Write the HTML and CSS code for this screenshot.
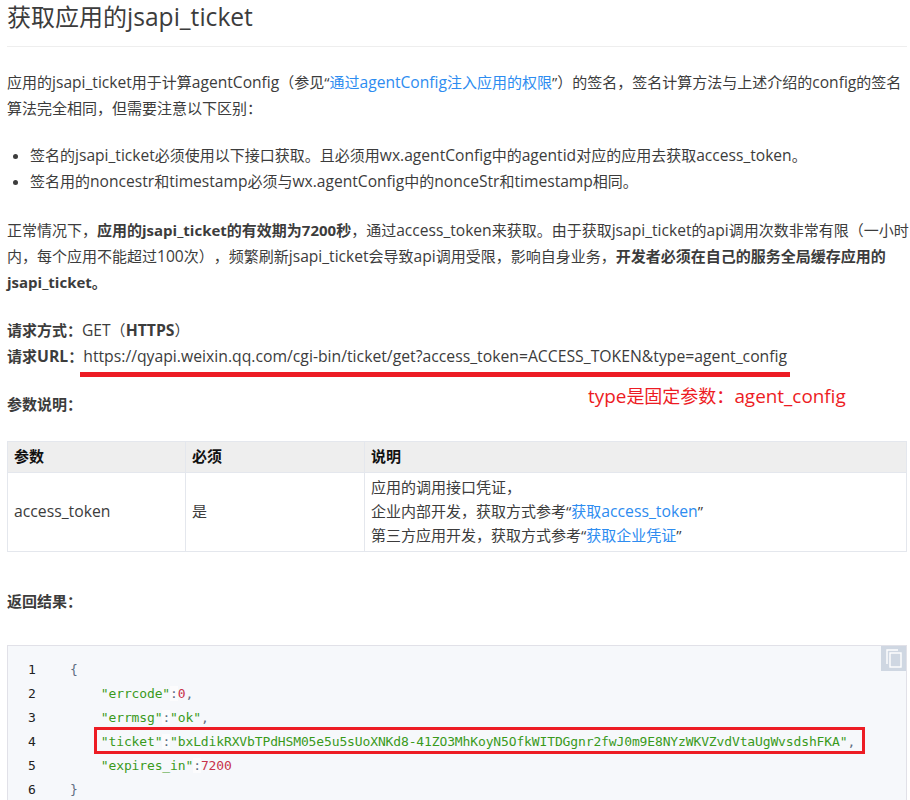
FILE: index.html
```html
<!DOCTYPE html>
<html lang="zh-CN">
<head>
<meta charset="utf-8">
<title>获取应用的jsapi_ticket</title>
<link rel="stylesheet" href="styles.css">
</head>
<body>
<main class="page">
  <h2 class="title">获取应用的<span class="l">jsapi_ticket</span></h2>
  <p class="para">应用的<span class="l">jsapi_ticket</span>用于计算<span class="l">agentConfig</span>（参见“<a href="#">通过<span class="l">agentConfig</span>注入应用的权限</a>”）的签名，签名计算方法与上述介绍的<span class="l">config</span>的签名算法完全相同，但需要注意以下区别：</p>
  <ul class="list">
    <li>签名的<span class="l">jsapi_ticket</span>必须使用以下接口获取。且必须用<span class="l">wx.agentConfig</span>中的<span class="l">agentid</span>对应的应用去获取<span class="l">access_token</span>。</li>
    <li>签名用的<span class="l">noncestr</span>和<span class="l">timestamp</span>必须与<span class="l">wx.agentConfig</span>中的<span class="l">nonceStr</span>和<span class="l">timestamp</span>相同。</li>
  </ul>
  <p class="para">正常情况下，<strong>应用的jsapi_ticket的有效期为7200秒</strong>，通过<span class="l">access_token</span>来获取。由于获取<span class="l">jsapi_ticket</span>的<span class="l">api</span>调用次数非常有限（一小时内，每个应用不能超过<span class="l">100</span>次），频繁刷新<span class="l">jsapi_ticket</span>会导致<span class="l">api</span>调用受限，影响自身业务，<strong>开发者必须在自己的服务全局缓存应用的jsapi_ticket。</strong></p>
  <p class="para"><strong>请求方式：</strong><span class="l">GET</span>（<strong class="url">HTTPS</strong>）<br><strong>请求<span class="url">URL</span>：</strong><span class="url">https://qyapi.weixin.qq.com/cgi-bin/ticket/get?access_token=ACCESS_TOKEN&amp;type=agent_config</span></p>
  <p class="para params"><strong>参数说明：</strong></p>
  <table class="table">
    <thead>
      <tr><th class="col-a">参数</th><th class="col-b">必须</th><th>说明</th></tr>
    </thead>
    <tbody>
      <tr>
        <td><span class="url">access_token</span></td>
        <td>是</td>
        <td>应用的调用接口凭证，<br>企业内部开发，获取方式参考“<a href="#">获取<span class="url">access_token</span></a>”<br>第三方应用开发，获取方式参考“<a href="#">获取企业凭证</a>”</td>
      </tr>
    </tbody>
  </table>
  <p class="para result"><strong>返回结果：</strong></p>
  <div class="code">
    <span class="copy"><svg width="16" height="19" viewBox="0 0 16 19" aria-hidden="true"><path d="M12 1H1v14" fill="none" stroke="#fff" stroke-width="1.4"/><rect x="4" y="4" width="11" height="14" fill="none" stroke="#fff" stroke-width="1.4"/></svg></span>
    <div class="row"><span class="num">1</span><code>{</code></div>
    <div class="row"><span class="num">2</span><code>    <i class="str">"errcode"</i><i class="colon">:</i><i class="val">0</i>,</code></div>
    <div class="row"><span class="num">3</span><code>    <i class="str">"errmsg"</i><i class="colon">:</i><i class="str">"ok"</i>,</code></div>
    <div class="row"><span class="num">4</span><code>    <i class="str">"ticket"</i><i class="colon">:</i><i class="str">"bxLdikRXVbTPdHSM05e5u5sUoXNKd8-41ZO3MhKoyN5OfkWITDGgnr2fwJ0m9E8NYzWKVZvdVtaUgWvsdshFKA"</i>,</code></div>
    <div class="row"><span class="num">5</span><code>    <i class="str">"expires_in"</i><i class="colon">:</i><i class="val">7200</i></code></div>
    <div class="row"><span class="num">6</span><code>}</code></div>
  </div>
  <div class="mark-line"></div>
  <div class="mark-text"><span class="url">type</span>是固定参数：<span class="url">agent_config</span></div>
  <div class="mark-box"></div>
</main>
</body>
</html>
```
FILE: styles.css
```css
html, body {
  margin: 0;
  height: 800px;
  overflow: hidden;
  background: #fff;
}
.page {
  position: relative;
  box-sizing: border-box;
  width: 910px;
  height: 800px;
  overflow: hidden;
  padding: 0 3px 0 7px;
  color: #3c3c3c;
  font: 15px/26px "Open Sans", "Noto Sans CJK SC", sans-serif;
  text-spacing-trim: space-all;
}
.l { font-size: 1.04em; }
.url { font-size: 1.05em; }
.title .l { font-size: 1.025em; }
.title {
  margin: 0 0 22px;
  height: 46px;
  box-sizing: content-box;
  border-bottom: 1px solid #eee;
  font-size: 24px;
  font-weight: 400;
  line-height: 34px;
}
.para { margin: 0 -3px 22px 0; }
a { color: #2d8cf0; text-decoration: none; }
strong { font-weight: 700; }
.list { margin: -1px 0 23px; padding: 0 0 0 23px; }
.params { margin-bottom: 24px; }
.table {
  width: 900px;
  border-collapse: collapse;
  table-layout: fixed;
  margin-bottom: 36px;
  font-size: 15px;
  line-height: 24px;
}
.table th, .table td {
  border: 1px solid #e4e7ed;
  padding: 2px 6px 4px;
  text-align: left;
  vertical-align: middle;
}
.table th { background: #eee; color: #111; }
.col-a { width: 165px; }
.col-b { width: 166px; }
.result { margin-bottom: 31px; }
.code {
  position: relative;
  height: 200px;
  box-sizing: border-box;
  border: 1px solid #e1e1e8;
  background: #f6f8fb;
  padding: 12px 0 0 20px;
}
.copy {
  position: absolute;
  top: 0;
  right: 0;
  width: 25px;
  height: 25px;
  background: #cfd7e2;
  display: flex;
  align-items: center;
  justify-content: center;
}
.row { display: flex; height: 24px; line-height: 24px; }
.num { width: 42px; font: 13px/24px "DejaVu Sans Mono", monospace; color: #222; }
code {
  white-space: pre;
  font: 13px/24px "DejaVu Sans Mono", monospace;
  letter-spacing: -0.13px;
  color: #5e6d82;
}
code i { font-style: normal; }
.str { color: #3a9a1b; }
.val { color: #c8324b; }
.colon { background: #fcfcfd; }
.mark-line {
  position: absolute;
  left: 80px;
  top: 372px;
  width: 710px;
  height: 5px;
  background: #ed1c24;
}
.mark-text {
  position: absolute;
  left: 588px;
  top: 383px;
  color: #ed1c24;
  font-size: 18px;
  line-height: 26px;
}
.mark-box {
  position: absolute;
  left: 94px;
  top: 727px;
  width: 765px;
  height: 21px;
  border: 3px solid #ed1c24;
}
```
